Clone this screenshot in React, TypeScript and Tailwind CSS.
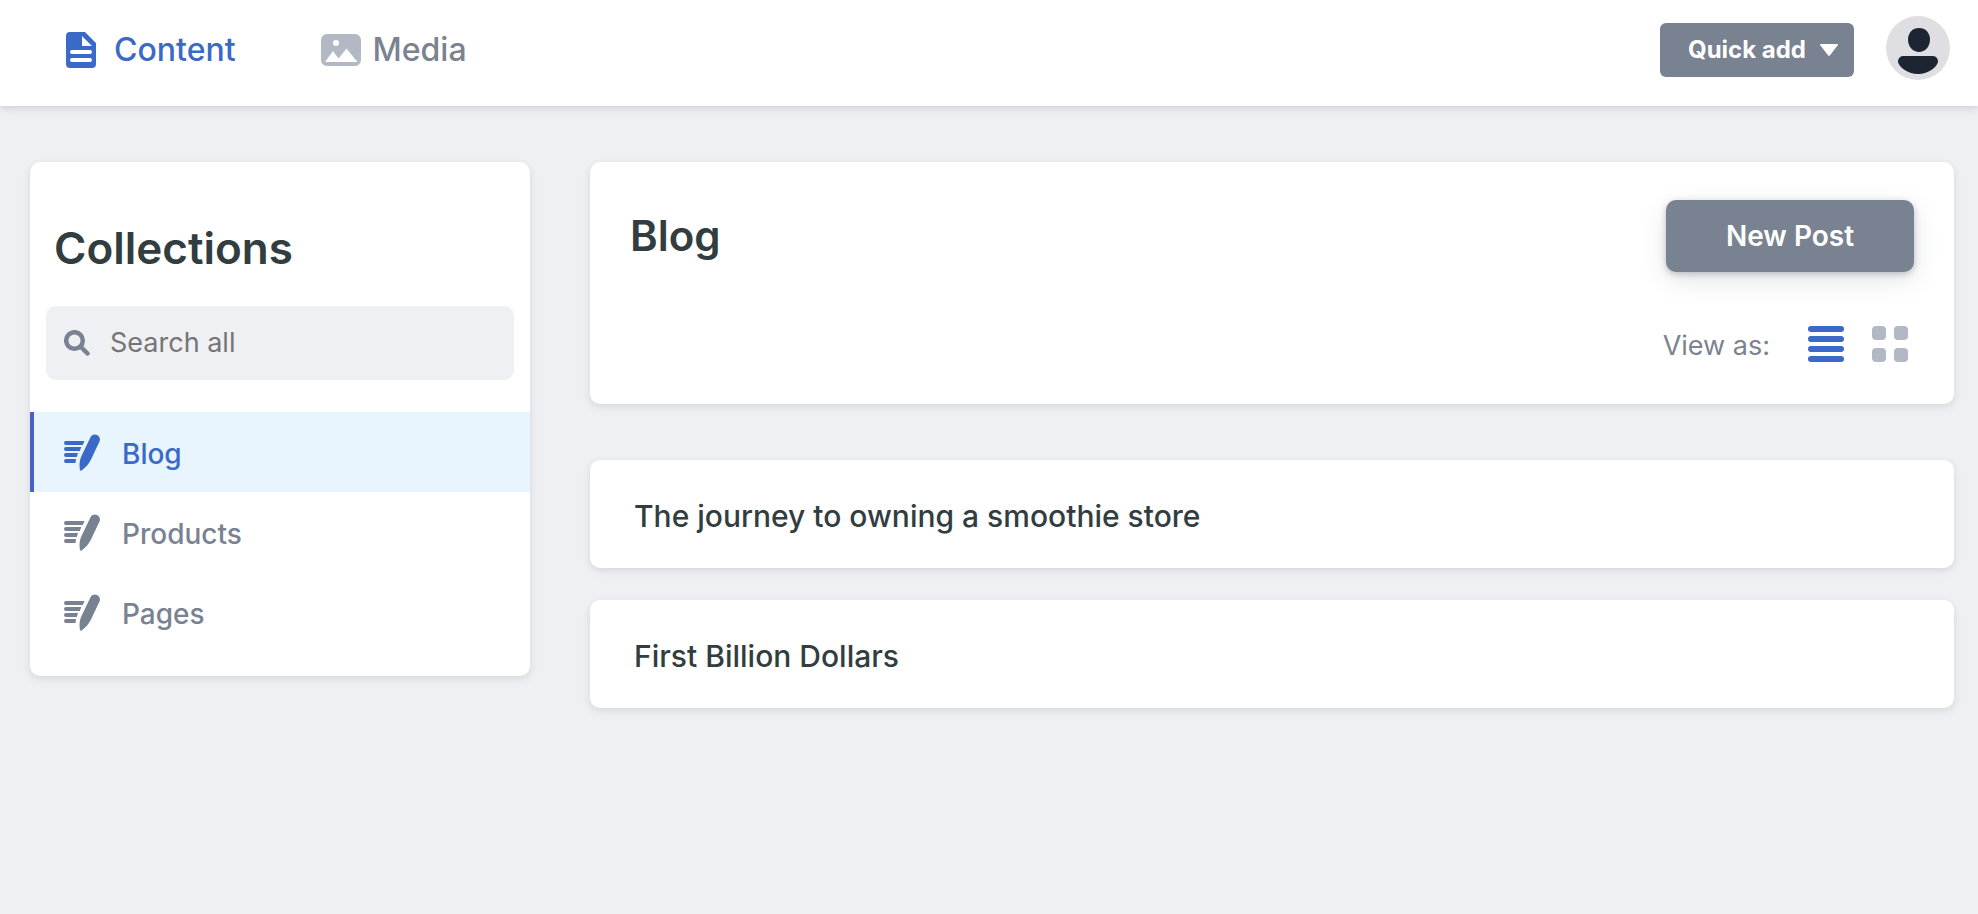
import React from 'react';

const collections = ['Blog', 'Products', 'Pages'];
const posts = ['The journey to owning a smoothie store', 'First Billion Dollars'];

const cardShadow = 'shadow-[0_4px_12px_0_rgba(68,74,87,0.05),0_2px_6px_0_rgba(68,74,87,0.1)]';

function ContentIcon() {
  return (
    <svg className="w-[30px] h-9" viewBox="0 0 30 36" fill="currentColor" aria-hidden="true">
      <path
        fillRule="evenodd"
        d="M4 0h15l11 11v21a4 4 0 0 1-4 4H4a4 4 0 0 1-4-4V4a4 4 0 0 1 4-4zM16 4v10h10zM6 18a2 2 0 0 0 0 4h18a2 2 0 0 0 0-4zM6 26a2 2 0 0 0 0 4h18a2 2 0 0 0 0-4z"
      />
    </svg>
  );
}

function MediaIcon() {
  return (
    <svg className="w-10 h-8" viewBox="0 0 40 32" fill="currentColor" aria-hidden="true">
      <path
        fillRule="evenodd"
        d="M6 0h28a6 6 0 0 1 6 6v20a6 6 0 0 1-6 6H6a6 6 0 0 1-6-6V6a6 6 0 0 1 6-6zM15 6a3 3 0 1 0 0 6a3 3 0 0 0 0-6zM4 28h32.500L25.500 14.500L17.500 24.500L12 17z"
      />
    </svg>
  );
}

function WriteIcon() {
  return (
    <svg className="w-9 h-[37px]" viewBox="0 0 36 37" fill="currentColor" aria-hidden="true">
      <path d="M2 7h18.500l-1.800 4H2a2 2 0 0 1 0-4zM2 13h15.300l-1.500 4H2a2 2 0 0 1 0-4zM2 19h12l-1.200 4H2a2 2 0 0 1 0-4zM2 25h10l-.5 4H2a2 2 0 0 1 0-4z" />
      <path d="M26.500 3.200C27.800.6 30.600-.1 33 1.100c2.600 1.300 3.600 4 2.500 6.400L27 25.500c-2 4.300-5.200 8-9.400 11-.8.500-1.600.2-1.700-.8-.8-5.200-.3-9.600 1.700-13.900z" />
    </svg>
  );
}

function SearchIcon() {
  return (
    <svg className="w-[26px] h-[26px]" viewBox="0 0 26 26" fill="none" stroke="currentColor" strokeLinecap="round" aria-hidden="true">
      <circle cx="10.500" cy="10.500" r="8.300" strokeWidth="4.500" />
      <path d="M17 17l6.500 6.500" strokeWidth="4.500" />
    </svg>
  );
}

function ListIcon() {
  return (
    <svg className="w-9 h-9" viewBox="0 0 36 36" fill="currentColor" aria-hidden="true">
      <rect y="0" width="36" height="6" rx="3" />
      <rect y="10" width="36" height="6" rx="3" />
      <rect y="20" width="36" height="6" rx="3" />
      <rect y="30" width="36" height="6" rx="3" />
    </svg>
  );
}

function GridIcon() {
  return (
    <svg className="w-9 h-9" viewBox="0 0 36 36" fill="currentColor" aria-hidden="true">
      <rect width="14" height="14" rx="4" />
      <rect x="22" width="14" height="14" rx="4" />
      <rect y="22" width="14" height="14" rx="4" />
      <rect x="22" y="22" width="14" height="14" rx="4" />
    </svg>
  );
}

function AvatarIcon() {
  return (
    <svg className="w-16 h-16" viewBox="0 0 64 64" aria-hidden="true">
      <circle cx="32" cy="32" r="32" fill="#dfdfe3" />
      <g fill="#1e2532">
        <path d="M33 12c6.500 0 11 4.800 11 11.500C44 31 39 36 33 36s-11-5-11-12.500C22 16.800 26.500 12 33 12z" />
        <path d="M18 40h28c3.500 0 6 2 6 5.500C52 50 43 58 32 58S12 50 12 45.500C12 42 14.500 40 18 40z" />
      </g>
    </svg>
  );
}

function Header() {
  return (
    <header className="flex items-center justify-between bg-white pt-4 pb-[22px] pl-[66px] pr-7 shadow-[0_4px_12px_0_rgba(68,74,87,0.05),0_2px_6px_0_rgba(68,74,87,0.15)]">
      <nav className="flex items-center gap-[85px] text-[32px] leading-10 font-medium">
        <a href="#content" className="flex items-center gap-[18px] text-[#3a69c7]">
          <ContentIcon />
          Content
        </a>
        <a href="#media" className="flex items-center gap-3 text-[#7b8290]">
          <span className="text-[#b3b9c4]">
            <MediaIcon />
          </span>
          Media
        </a>
      </nav>
      <div className="flex items-center gap-8">
        <button className="flex h-[54px] items-center gap-[14px] rounded-md bg-[#798291] pl-7 pr-4 text-2xl font-bold text-white">
          Quick add
          <svg className="w-[18px] h-3" viewBox="0 0 18 12" fill="currentColor" aria-hidden="true">
            <path d="M1 0h16q1.500 0 .7 1.200L10 11.200q-1 1.200-2 0L.3 1.200Q-.5 0 1 0z" />
          </svg>
        </button>
        <button className="pb-1" aria-label="Account">
          <AvatarIcon />
        </button>
      </div>
    </header>
  );
}

function Sidebar() {
  return (
    <aside className={`w-[500px] shrink-0 rounded-[10px] bg-white pt-14 pb-6 ${cardShadow}`}>
      <h2 className="px-6 text-[44px] leading-[60px] font-semibold text-[#313d3e]">Collections</h2>
      <label className="mx-4 mt-7 mb-8 flex h-[74px] items-center gap-5 rounded-[10px] bg-[#eff0f4] px-[18px] text-[#798291]">
        <SearchIcon />
        <input
          type="text"
          aria-label="Search all"
          placeholder="Search all"
          className="min-w-0 flex-1 bg-transparent text-[27px] leading-9 outline-none placeholder:text-[#757575]"
        />
      </label>
      <nav>
        {collections.map((name, i) => (
          <a
            key={name}
            href={`#${name.toLowerCase()}`}
            className={`flex h-20 items-center gap-[22px] border-l-4 pl-[30px] text-[28px] leading-9 font-medium ${
              i === 0 ? 'border-[#4863c6] bg-[#e8f5fe] text-[#3a69c7]' : 'border-transparent text-[#798291]'
            }`}
          >
            <WriteIcon />
            <span className="pt-1">{name}</span>
          </a>
        ))}
      </nav>
    </aside>
  );
}

export default function App() {
  return (
    <div className="min-h-screen bg-[#eff0f4] font-['Inter',sans-serif]">
      <Header />
      <div className="flex items-start gap-[60px] pt-14 pl-[30px] pr-6">
        <Sidebar />
        <main className="min-w-0 flex-1">
          <section className={`rounded-[10px] bg-white px-10 pt-[38px] pb-10 ${cardShadow}`}>
            <div className="flex items-center justify-between">
              <h1 className="text-[42px] leading-[60px] font-semibold text-[#313d3e]">Blog</h1>
              <button className="h-[72px] w-[248px] rounded-[10px] bg-[#798291] text-[28px] font-semibold text-white shadow-[0_8px_24px_0_rgba(68,74,87,0.15),0_2px_6px_0_rgba(68,74,87,0.3)]">
                New Post
              </button>
            </div>
            <div className="mt-[52px] flex h-10 items-center justify-end pr-[6px]">
              <span className="mr-[38px] pt-1 text-[27px] leading-9 text-[#7b8290]">View as:</span>
              <button className="mr-7 text-[#3a69c7]" aria-label="List view">
                <ListIcon />
              </button>
              <button className="text-[#b3b9c4]" aria-label="Grid view">
                <GridIcon />
              </button>
            </div>
          </section>
          <ul className="mt-14 flex flex-col gap-8">
            {posts.map((title) => (
              <li key={title}>
                <a
                  href="#post"
                  className={`flex h-[108px] items-center rounded-[10px] bg-white px-11 pt-1 text-3xl font-medium text-[#313d3e] ${cardShadow}`}
                >
                  {title}
                </a>
              </li>
            ))}
          </ul>
        </main>
      </div>
    </div>
  );
}
